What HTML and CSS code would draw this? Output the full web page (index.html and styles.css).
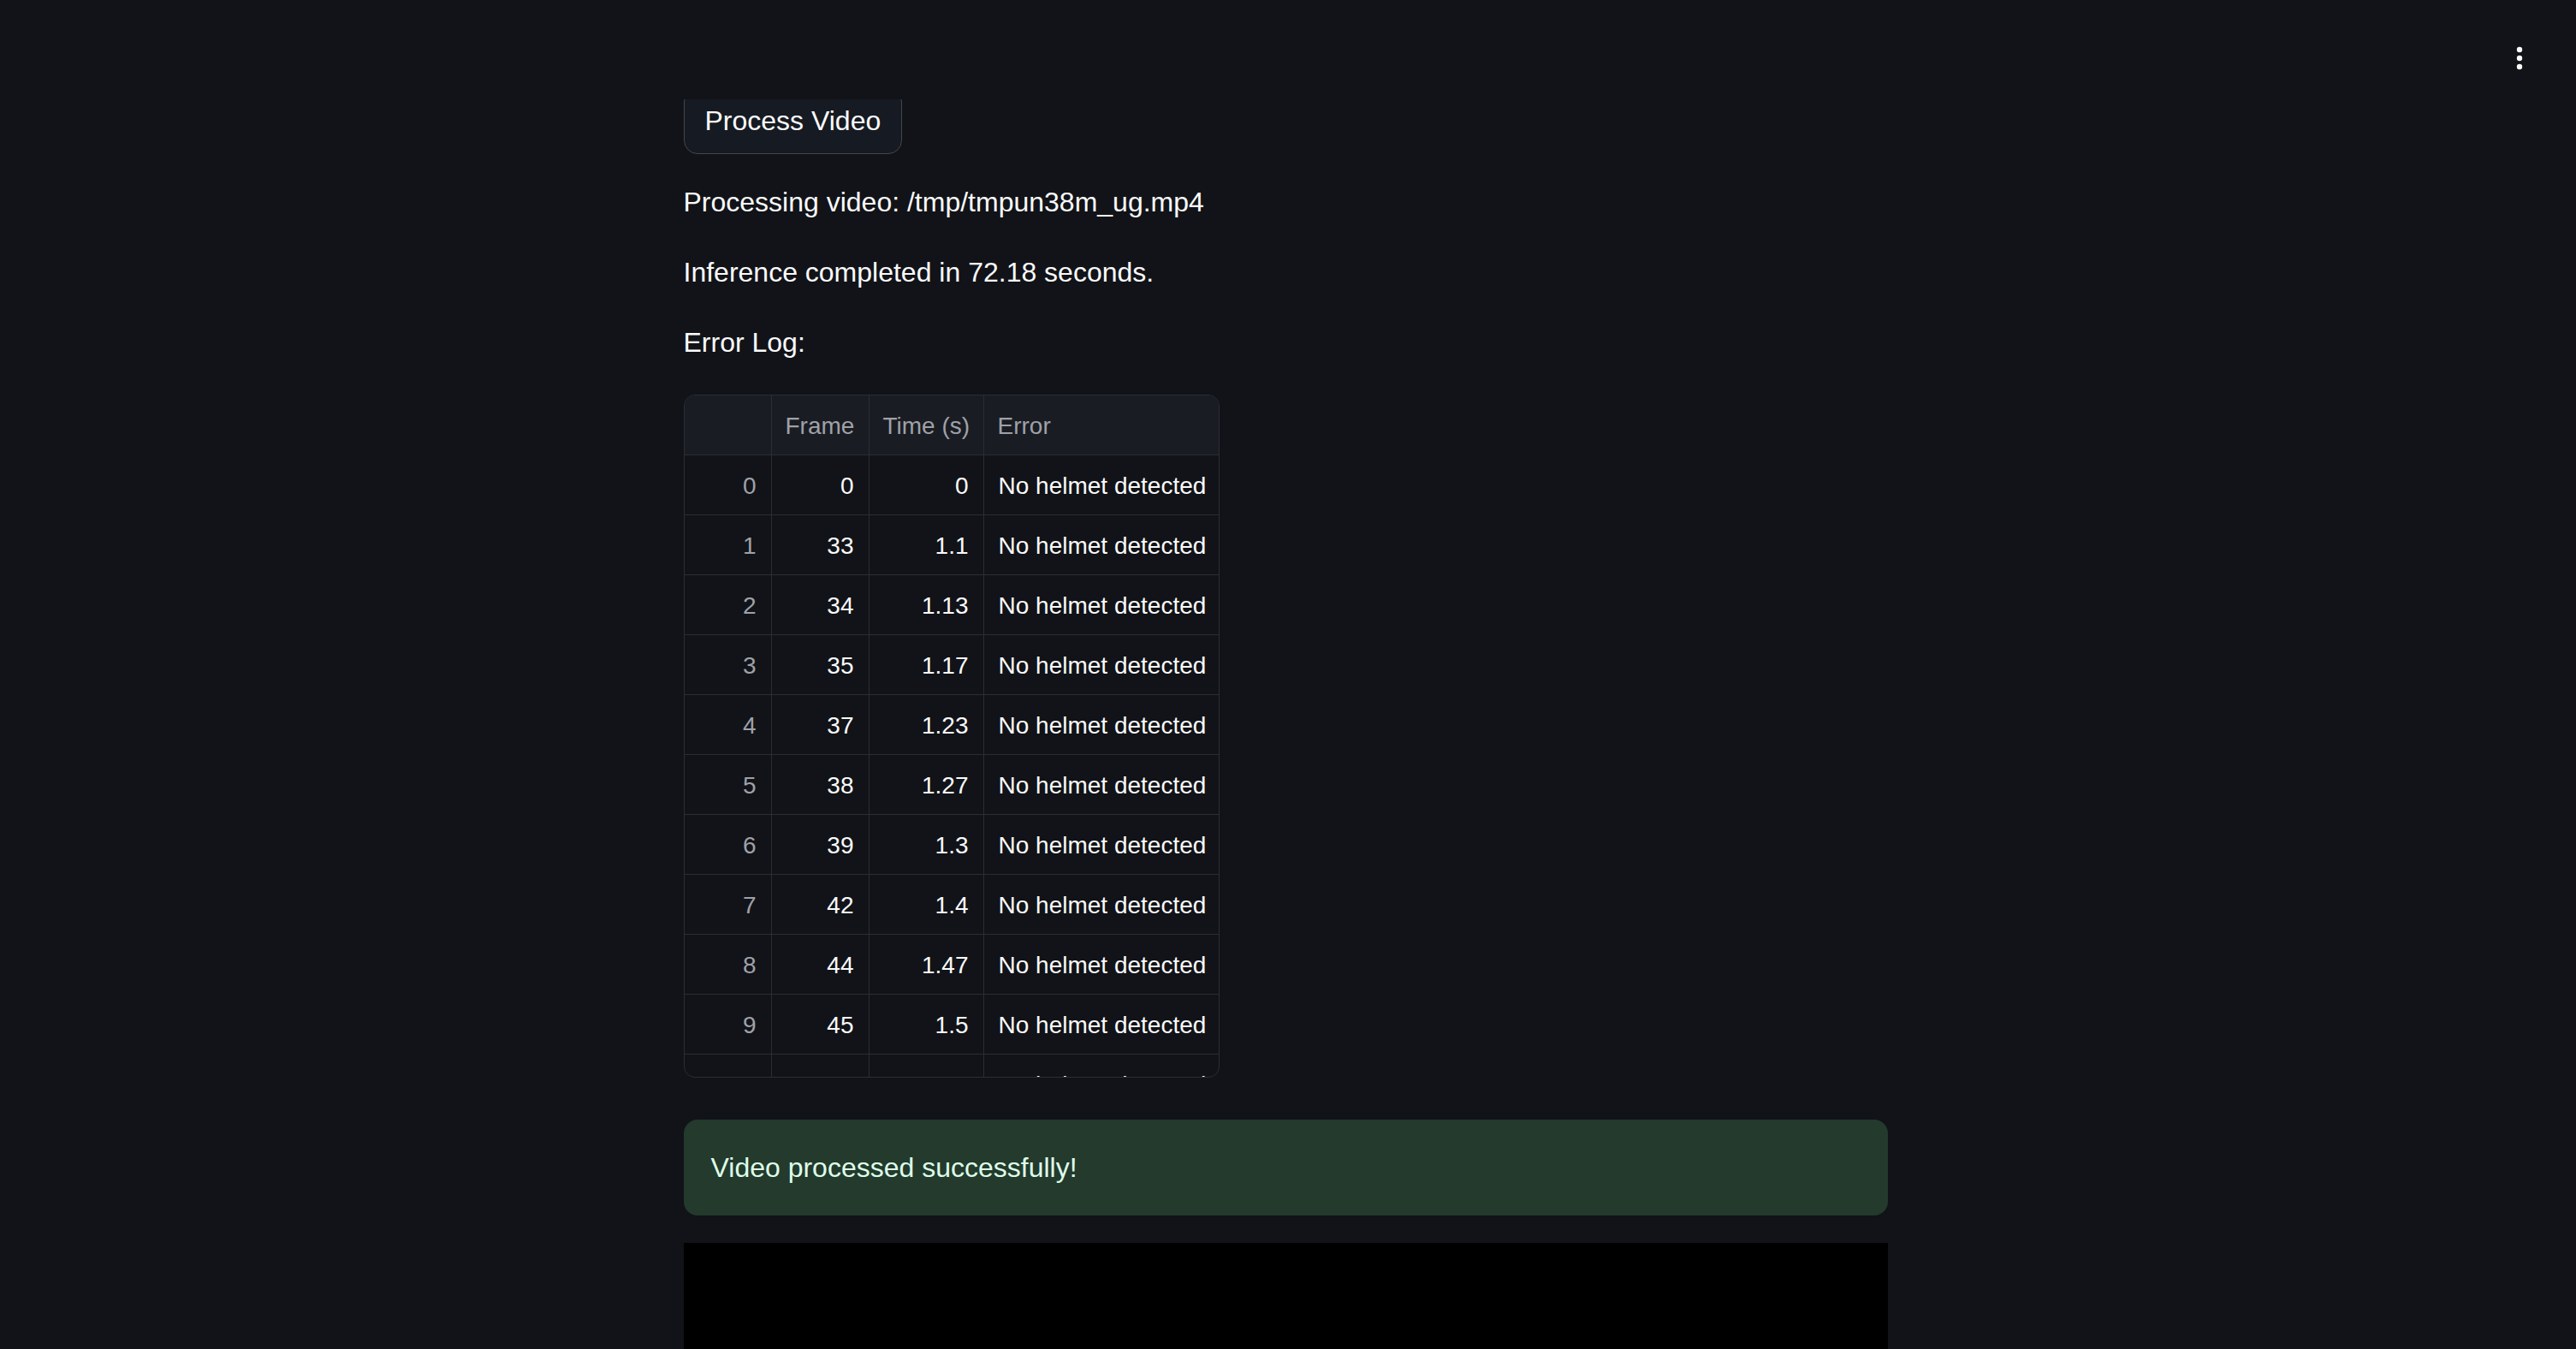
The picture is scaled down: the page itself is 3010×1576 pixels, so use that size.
FILE: index.html
```html
<!DOCTYPE html>
<html lang="en">
<head>
<meta charset="utf-8">
<title>Helmet Detection</title>
<link rel="stylesheet" href="styles.css">
</head>
<body>
<header class="app-header">
  <button class="menu-btn" aria-label="Main menu">
    <svg width="12" height="42" viewBox="0 0 12 42"><circle cx="6" cy="16" r="3.2" fill="#fafafa"/><circle cx="6" cy="26" r="3.2" fill="#fafafa"/><circle cx="6" cy="36" r="3.2" fill="#fafafa"/></svg>
  </button>
</header>
<main class="main">
  <div class="block">
    <button class="btn">Process Video</button>
    <p class="text">Processing video: /tmp/tmpun38m_ug.mp4</p>
    <p class="text">Inference completed in 72.18 seconds.</p>
    <p class="text">Error Log:</p>
    <div class="grid-wrap">
      <div class="grid">
        <div class="cell head"></div>
        <div class="cell head">Frame</div>
        <div class="cell head">Time (s)</div>
        <div class="cell head last">Error</div>

        <div class="cell idx">0</div><div class="cell num">0</div><div class="cell num">0</div><div class="cell txt last">No helmet detected</div>
        <div class="cell idx">1</div><div class="cell num">33</div><div class="cell num">1.1</div><div class="cell txt last">No helmet detected</div>
        <div class="cell idx">2</div><div class="cell num">34</div><div class="cell num">1.13</div><div class="cell txt last">No helmet detected</div>
        <div class="cell idx">3</div><div class="cell num">35</div><div class="cell num">1.17</div><div class="cell txt last">No helmet detected</div>
        <div class="cell idx">4</div><div class="cell num">37</div><div class="cell num">1.23</div><div class="cell txt last">No helmet detected</div>
        <div class="cell idx">5</div><div class="cell num">38</div><div class="cell num">1.27</div><div class="cell txt last">No helmet detected</div>
        <div class="cell idx">6</div><div class="cell num">39</div><div class="cell num">1.3</div><div class="cell txt last">No helmet detected</div>
        <div class="cell idx">7</div><div class="cell num">42</div><div class="cell num">1.4</div><div class="cell txt last">No helmet detected</div>
        <div class="cell idx">8</div><div class="cell num">44</div><div class="cell num">1.47</div><div class="cell txt last">No helmet detected</div>
        <div class="cell idx">9</div><div class="cell num">45</div><div class="cell num">1.5</div><div class="cell txt last">No helmet detected</div>
        <div class="cell idx">10</div><div class="cell num">46</div><div class="cell num">1.53</div><div class="cell txt last">No helmet detected</div>
      </div>
    </div>
    <div class="alert-success">Video processed successfully!</div>
    <div class="video"></div>
  </div>
</main>
</body>
</html>
```
FILE: styles.css
```css
html, body {
  margin: 0;
  padding: 0;
  background: #111318;
}
body {
  padding-right: 6px;
  font-family: "Liberation Sans", Arial, Helvetica, sans-serif;
  color: #fafafa;
  overflow: hidden;
}

.app-header {
  position: fixed;
  top: 0;
  left: 0;
  right: 0;
  height: 116px;
  box-sizing: border-box;
  background: #111318;
  z-index: 10;
  display: flex;
  justify-content: flex-end;
  align-items: flex-start;
  padding: 42px 60px 0 0;
}
.menu-btn {
  background: none;
  border: none;
  padding: 0;
  margin: 0;
  line-height: 0;
}

.main {
  width: 1407px;
  margin: 0 auto;
}
.block {
  display: flex;
  flex-direction: column;
  gap: 31px;
  padding-top: 103px;
}

.btn {
  align-self: flex-start;
  box-sizing: border-box;
  height: 77px;
  padding: 0 24px;
  border: 1px solid #44464e;
  border-radius: 16px;
  background: #161a22;
  color: #fafafa;
  font-family: inherit;
  font-size: 32px;
  line-height: 51px;
}

.text {
  margin: 0;
  font-size: 32px;
  line-height: 51.2px;
}

.grid-wrap {
  margin-top: 3px;
  width: 626px;
  height: 798px;
  box-sizing: border-box;
  border: 1px solid #2b2d34;
  border-radius: 13px;
  overflow: hidden;
  background: #111318;
}
.grid {
  display: grid;
  grid-template-columns: 102px 114px 134px 1fr;
  grid-auto-rows: 70px;
}
.cell {
  box-sizing: border-box;
  border-right: 1px solid #2b2d34;
  border-bottom: 1px solid #2b2d34;
  display: flex;
  align-items: center;
  padding: 3px 17px 0;
  font-size: 28px;
  white-space: nowrap;
  overflow: hidden;
}
.cell.last {
  border-right: none;
}
.head {
  background: #1a1c23;
  color: #9fa1a8;
  padding-left: 16px;
}
.idx {
  justify-content: flex-end;
  color: #9fa1a8;
}
.num {
  justify-content: flex-end;
  color: #fafafa;
}
.txt {
  color: #fafafa;
}

.alert-success {
  margin-top: 18px;
  padding: 30px 32px;
  border-radius: 16px;
  background: #233a2d;
  color: #dffde9;
  font-size: 32px;
  line-height: 52px;
}

.video {
  margin-top: 1px;
  height: 800px;
  background: #000;
}
```
